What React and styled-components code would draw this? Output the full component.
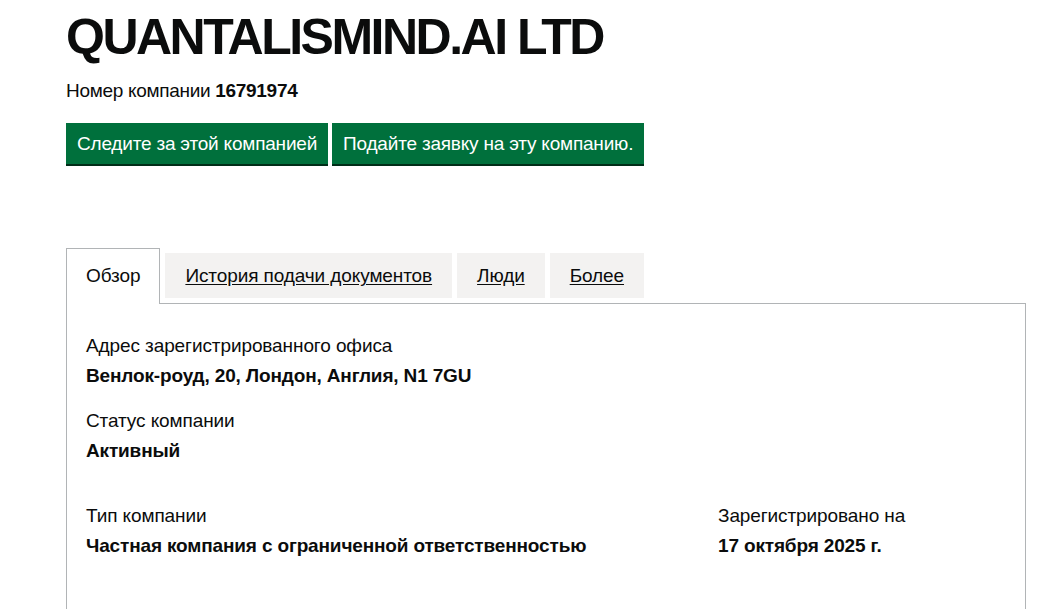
import React from 'react'
import styled, { createGlobalStyle } from 'styled-components'

const GlobalStyle = createGlobalStyle`
  body {
    margin: 0;
    background: #ffffff;
    color: #0b0c0c;
    font-family: "Liberation Sans", Arial, sans-serif;
  }
`

const Page = styled.div`
  padding: 0 33px 0 66px;
`

const Title = styled.h1`
  margin: 12px 0 0;
  font-size: 50px;
  line-height: 51px;
  font-weight: 700;
  letter-spacing: -2.5px;
`

const CompanyNumber = styled.p`
  margin: 15px 0 0;
  font-size: 19px;
  line-height: 25px;
  letter-spacing: -0.3px;

  strong {
    font-weight: 700;
  }
`

const Actions = styled.div`
  display: flex;
  gap: 4px;
  margin-top: 20px;
`

const Button = styled.button`
  font-family: "Liberation Sans", Arial, sans-serif;
  font-size: 19px;
  line-height: 23px;
  letter-spacing: -0.2px;
  color: #ffffff;
  background: #00703c;
  border: 2px solid transparent;
  border-radius: 0;
  box-shadow: 0 2px 0 #002d18;
  padding: 7px 9px 7px;
  cursor: pointer;
`

const TabList = styled.ul`
  display: flex;
  list-style: none;
  margin: 84px 0 0;
  padding: 0;
  align-items: flex-start;
`

const Tab = styled.li`
  margin-right: 5px;
  font-size: 19px;
  line-height: 25px;
  letter-spacing: -0.1px;
  background: ${p => (p.$selected ? '#ffffff' : '#f3f2f1')};
  border: ${p => (p.$selected ? '1px solid #b1b4b6' : 'none')};
  border-bottom: 0;
  padding: ${p => (p.$selected ? '14px 19px 16px' : '10px 20px')};
  margin-top: ${p => (p.$selected ? '0' : '5px')};
  margin-bottom: ${p => (p.$selected ? '-1px' : '0')};
  position: relative;

  a {
    color: #0b0c0c;
    text-decoration: ${p => (p.$selected ? 'none' : 'underline')};
    text-underline-offset: 2px;
  }
`

const Panel = styled.div`
  border: 1px solid #b1b4b6;
  padding: 29px 19px 60px;
`

const Field = styled.dl`
  margin: 0 0 20px;
`

const Label = styled.dt`
  font-size: 19px;
  line-height: 25px;
  letter-spacing: -0.1px;
  margin-bottom: 5px;
`

const Value = styled.dd`
  margin: 0;
  font-size: 19px;
  line-height: 25px;
  font-weight: 700;
  letter-spacing: -0.15px;
`

const Columns = styled.div`
  display: grid;
  grid-template-columns: 632px 1fr;
  margin-top: 40px;
`

const tabs = ['Обзор', 'История подачи документов', 'Люди', 'Более']

export default function App() {
  return (
    <>
      <GlobalStyle />
      <Page>
        <Title>QUANTALISMIND.AI LTD</Title>
        <CompanyNumber>
          Номер компании <strong>16791974</strong>
        </CompanyNumber>
        <Actions>
          <Button>Следите за этой компанией</Button>
          <Button>Подайте заявку на эту компанию.</Button>
        </Actions>
        <TabList>
          {tabs.map((t, i) => (
            <Tab key={t} $selected={i === 0}>
              <a href="#">{t}</a>
            </Tab>
          ))}
        </TabList>
        <Panel>
          <Field>
            <Label>Адрес зарегистрированного офиса</Label>
            <Value>Венлок-роуд, 20, Лондон, Англия, N1 7GU</Value>
          </Field>
          <Field>
            <Label>Статус компании</Label>
            <Value>Активный</Value>
          </Field>
          <Columns>
            <Field>
              <Label>Тип компании</Label>
              <Value>Частная компания с ограниченной ответственностью</Value>
            </Field>
            <Field>
              <Label>Зарегистрировано на</Label>
              <Value>17 октября 2025 г.</Value>
            </Field>
          </Columns>
        </Panel>
      </Page>
    </>
  )
}
